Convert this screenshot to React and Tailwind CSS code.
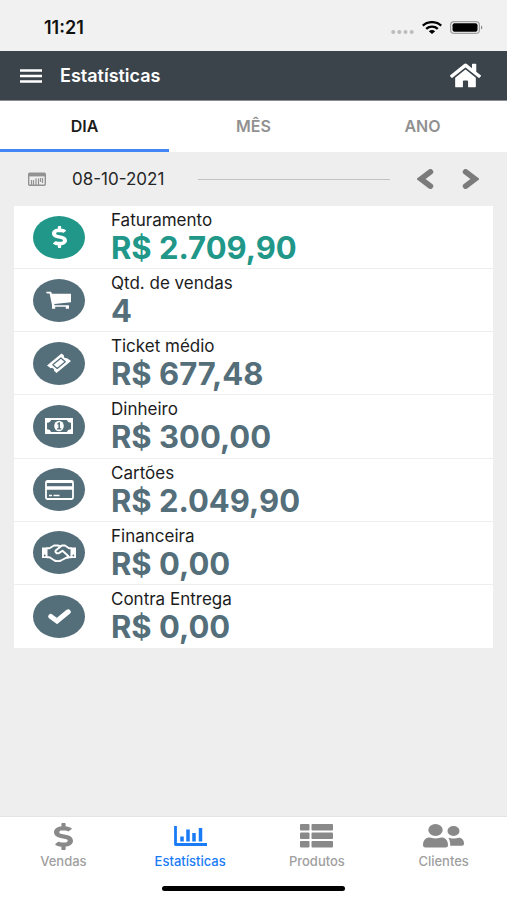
import { useState } from 'react'
import { FaDollarSign, FaHome } from 'react-icons/fa'

const TABS = ['DIA', 'MÊS', 'ANO']

const STATS = [
  { label: 'Faturamento', value: 'R$ 2.709,90', icon: DollarIcon, highlight: true },
  { label: 'Qtd. de vendas', value: '4', icon: CartIcon },
  { label: 'Ticket médio', value: 'R$ 677,48', icon: TicketIcon },
  { label: 'Dinheiro', value: 'R$ 300,00', icon: MoneyIcon },
  { label: 'Cartões', value: 'R$ 2.049,90', icon: CardIcon },
  { label: 'Financeira', value: 'R$ 0,00', icon: HandshakeIcon },
  { label: 'Contra Entrega', value: 'R$ 0,00', icon: CheckIcon },
]

const NAV = [
  { label: 'Vendas', icon: SalesIcon },
  { label: 'Estatísticas', icon: ChartIcon },
  { label: 'Produtos', icon: ListIcon },
  { label: 'Clientes', icon: PeopleIcon },
]

function DollarIcon() {
  return <FaDollarSign className="w-[15px] h-[22px]" preserveAspectRatio="none" />
}

function CartIcon() {
  return (
    <svg viewBox="0 0 26 19" className="w-[26px] h-[19px]" fill="currentColor">
      <path d="M0 .8h5l1 2h19v8.400L8.200 13l.3 1.300h14.500v3.500h-3.200v-2H9.200v2H6V14L3.600 2.600H.8z" />
    </svg>
  )
}

function TicketIcon() {
  return (
    <svg viewBox="0 0 26 22" className="w-[26px] h-[22px]" strokeLinejoin="round">
      <path
        d="M1 13.500 15.500 1.500 18 3.500c-.6 1.900 1 3.300 3.200 2.700L25 9 10.500 21 8 18.800c.6-1.900-1.200-3.200-3.300-2.600z"
        fill="currentColor"
      />
      <path d="M6.800 12.800 14.900 6 19.300 9.800 11.200 16.500z" fill="none" className="stroke-[#546e7a]" strokeWidth="1.200" />
    </svg>
  )
}

function MoneyIcon() {
  return (
    <svg viewBox="0 0 28 16" className="w-[28px] h-[16px]" fill="currentColor">
      <path fillRule="evenodd" d="M0 0h28v16H0zM6 2C5.700 3.600 4.300 4.600 2 4.800v6.400c2.300.200 3.700 1.200 4 2.800h16c.300-1.600 1.700-2.600 4-2.800V4.800C23.700 4.600 22.300 3.600 22 2z" />
      <ellipse cx="14" cy="8" rx="4.800" ry="5.200" />
      <path d="M12.200 5.700 14 4.300h1v6h1.300v1.200h-4.300v-1.200h1.400V6.300l-.8.500z" className="fill-[#546e7a]" />
    </svg>
  )
}

function CardIcon() {
  return (
    <svg viewBox="0 0 29 20" className="w-[29px] h-[20px]" fill="none" stroke="currentColor">
      <rect x="1" y="1" width="27" height="18" rx="1.500" strokeWidth="1.800" />
      <path d="M1 2h27" strokeWidth="2" />
      <path d="M1 8h27" strokeWidth="3.500" />
      <path d="M4 15.500h3M8.500 15.500h6" strokeWidth="1.500" />
    </svg>
  )
}

function HandshakeIcon() {
  return (
    <svg viewBox="0 0 34 18" className="w-[34px] h-[18px]" fill="none" stroke="currentColor">
      <path d="M0 3.500h5.500v10.500H0zM28.500 3.500H34v10.500h-5.500z" fill="currentColor" stroke="none" />
      <circle cx="2.700" cy="11.500" r=".9" className="fill-[#546e7a]" stroke="none" />
      <circle cx="31.300" cy="11.500" r=".9" className="fill-[#546e7a]" stroke="none" />
      <path
        d="M5 4.200h2.500L12 1.500h4l2 .8 2-.8h3l4 2.700h2M5 13.200h2.500l5 3.300c2.500 1 4.500.8 6.500 0l6.500-3.300H29M19 2.200l-5 4c-1.500 1.800.8 4 3.300 2.700l3.200-2.200 5.500 5c.8 1 .3 2-.6 2.200"
        strokeWidth="1.900" strokeLinejoin="round" strokeLinecap="round"
      />
    </svg>
  )
}

function CheckIcon() {
  return (
    <svg viewBox="0 0 23 15" className="w-[23px] h-[15px]" fill="none" stroke="currentColor">
      <path d="M2.800 7.500 9 12 20.200 2.800" strokeWidth="5" strokeLinecap="round" />
    </svg>
  )
}

function SalesIcon() {
  return <FaDollarSign className="w-[19px] h-[27px]" preserveAspectRatio="none" />
}

function ChartIcon() {
  return (
    <svg viewBox="0 0 33 20" className="w-[33px] h-[20px]" fill="none" stroke="currentColor" strokeWidth="3">
      <path d="M1.500 0v18.500H33" strokeWidth="2.800" strokeLinejoin="round" />
      <path d="M8 10.500v5M14 3.500v12M20 7v8.500M26.500 2v13.500" strokeWidth="3.500" />
    </svg>
  )
}

function ListIcon() {
  return (
    <svg viewBox="0 0 33 24" className="w-[33px] h-[24px]" fill="currentColor">
      {[0, 8.5, 17].map(y => (
        <g key={y}>
          <rect x="0" y={y} width="9.500" height="6.500" rx="1" />
          <rect x="11.500" y={y} width="21.500" height="6.500" rx="1" />
        </g>
      ))}
    </svg>
  )
}

function PeopleIcon() {
  return (
    <svg viewBox="0 0 41 24" className="w-[41px] h-[24px]" fill="currentColor">
      <ellipse cx="12.500" cy="6" rx="7.200" ry="6" />
      <path d="M0 21c0-5 3-7.500 6.500-7.500 2 0 3 1 6 1s4-1 6-1c3.500 0 6.500 2.500 6.500 7.500 0 1.700-.9 2.500-2.500 2.500h-20C.9 23.500 0 22.700 0 21z" />
      <ellipse cx="30.500" cy="7" rx="6" ry="5" />
      <path d="M25.300 14c2 0 3 .6 5.200.6s3.500-.8 5.500-.8c3 0 5 2.700 5 5.700 0 1.500-.8 2.200-2 2.200H27.200c.2-3.200-.400-5.700-1.900-7.700z" />
    </svg>
  )
}

function CalendarIcon() {
  return (
    <svg viewBox="0 0 18 14" className="w-[18px] h-[14px]" fill="none" stroke="currentColor">
      <rect x=".7" y="1.200" width="16.600" height="12" rx="1" strokeWidth="1.400" />
      <path d="M1 3h16" strokeWidth="2.800" />
      <path d="M3.500 13V8M5.500 13V8M8 13V6.500M10.500 13V6.500M12.500 10V6M14.500 11V6" strokeWidth="1.200" />
    </svg>
  )
}

function Chevron({ flip }) {
  return (
    <svg viewBox="0 0 17 20" className={`w-[17px] h-[20px] ${flip ? '-scale-x-100' : ''}`} fill="none" stroke="currentColor">
      <path d="M13.500 2.800 4 10l9.500 7.200" strokeWidth="5.500" strokeLinecap="round" strokeLinejoin="miter" />
    </svg>
  )
}

function StatusBar() {
  return (
    <div className="h-[51px] bg-[#f1f1f1] flex items-center justify-between pl-11 pr-6 pt-1">
      <span className="text-[18px] font-semibold text-[#111]">11:21</span>
      <div className="flex items-center gap-2">
        <svg viewBox="0 0 23 4" className="w-[23px] h-[4px] mt-2" fill="#bcbcbc">
          <circle cx="2.200" cy="2" r="2" />
          <circle cx="8.300" cy="2" r="2" />
          <circle cx="14.500" cy="2" r="2" />
          <circle cx="20.700" cy="2" r="2" />
        </svg>
        <svg viewBox="0 0 20 13" className="w-[20px] h-[13px]" fill="none" stroke="#000" strokeWidth="2.400">
          <path d="M.8 4.600C6 0 14 0 19.200 4.600M4.200 7.800c3.300-2.900 8.300-2.900 11.600 0" />
          <path d="M6.800 10.200c1.900-1.500 4.500-1.500 6.400 0L10 13z" fill="#000" stroke="none" />
        </svg>
        <svg viewBox="0 0 33 13" className="w-[33px] h-[13px]" fill="none">
          <rect x=".6" y=".6" width="28.800" height="11.800" rx="3.500" stroke="#a0a0a0" strokeWidth="1.200" />
          <rect x="2.500" y="2.200" width="25" height="8.600" rx="2" fill="#000" />
          <path d="M31 4.500c1.800.6 1.800 3.400 0 4z" fill="#8a8a8a" />
        </svg>
      </div>
    </div>
  )
}

function StatRow({ stat }) {
  const Icon = stat.icon
  return (
    <li className="flex items-center pl-[19px] border-b border-[#eeeeee] last:border-b-0">
      <div
        className={`w-[52px] h-[43px] shrink-0 rounded-[50%] flex items-center justify-center text-white ${
          stat.highlight ? 'bg-[#209788]' : 'bg-[#546e7a]'
        }`}
      >
        <Icon />
      </div>
      <div className="ml-[26px]">
        <p className="text-[17px] leading-[22px] text-[#1c1c1c]">{stat.label}</p>
        <p className={`text-[31px] leading-[34px] font-bold ${stat.highlight ? 'text-[#209788]' : 'text-[#546e7a]'}`}>
          {stat.value}
        </p>
      </div>
    </li>
  )
}

export default function App() {
  const [tab, setTab] = useState('DIA')
  const [page, setPage] = useState('Estatísticas')

  return (
    <div className="min-h-screen flex flex-col bg-[#eeeeee] font-['Inter',sans-serif]">
      <StatusBar />

      <header className="h-[50px] bg-[#3b444b] border-b border-[#8a8e92] flex items-center pl-5 pr-[26px] text-white">
        <button aria-label="Menu">
          <svg viewBox="0 0 22 14" className="w-[22px] h-[14px]" stroke="currentColor" strokeWidth="2.500">
            <path d="M0 1.500h22M0 7h22M0 12.500h22" />
          </svg>
        </button>
        <h1 className="ml-[18px] text-[18px] font-semibold">Estatísticas</h1>
        <button aria-label="Início" className="ml-auto">
          <FaHome className="w-[31px] h-[27px]" preserveAspectRatio="none" />
        </button>
      </header>

      <div className="grid grid-cols-3 bg-white">
        {TABS.map(name => (
          <button
            key={name}
            onClick={() => setTab(name)}
            className={`h-[51px] pt-[2px] border-b-3 text-[16px] leading-[22px] font-semibold ${
              tab === name ? 'border-[#4285f4] text-[#1c1c1c]' : 'border-transparent text-[#919191]'
            }`}
          >
            {name}
          </button>
        ))}
      </div>

      <main className="flex-1 px-[14px] pb-6">
        {/* Data */}
        <div className="h-[54px] flex items-center pl-[14px] pr-[14px] text-[#7b7b7b]">
          <span className="text-[#929292]"><CalendarIcon /></span>
          <span className="pl-[26px] pr-[34px] whitespace-nowrap text-[17px] leading-[22px] text-[#262626]">08-10-2021</span>
          <span className="flex-1 h-px bg-[#c2c2c2]" />
          <button aria-label="Dia anterior" className="ml-[27px]"><Chevron /></button>
          <button aria-label="Próximo dia" className="ml-[28px]"><Chevron flip /></button>
        </div>

        <ul className="grid auto-rows-fr min-h-[442px] bg-white">
          {STATS.map(stat => <StatRow key={stat.label} stat={stat} />)}
        </ul>
      </main>

      <footer className="bg-white border-t border-[#e4e4e4]">
        <nav className="grid grid-cols-4">
          {NAV.map(({ label, icon: Icon }) => (
            <button
              key={label}
              onClick={() => setPage(label)}
              className={`flex flex-col items-center pt-[5px] ${page === label ? 'text-[#1a7cf5]' : 'text-[#898989]'}`}
            >
              <span className="h-[28px] flex items-center"><Icon /></span>
              <span className={`mt-[3px] text-[13px] leading-[16px] font-medium ${page === label ? '' : 'text-[#a0a0a0]'}`}>
                {label}
              </span>
            </button>
          ))}
        </nav>
        <div className="flex justify-center pt-[17px] pb-[9px]">
          <div className="w-[36%] h-[5px] rounded-full bg-black" />
        </div>
      </footer>
    </div>
  )
}
